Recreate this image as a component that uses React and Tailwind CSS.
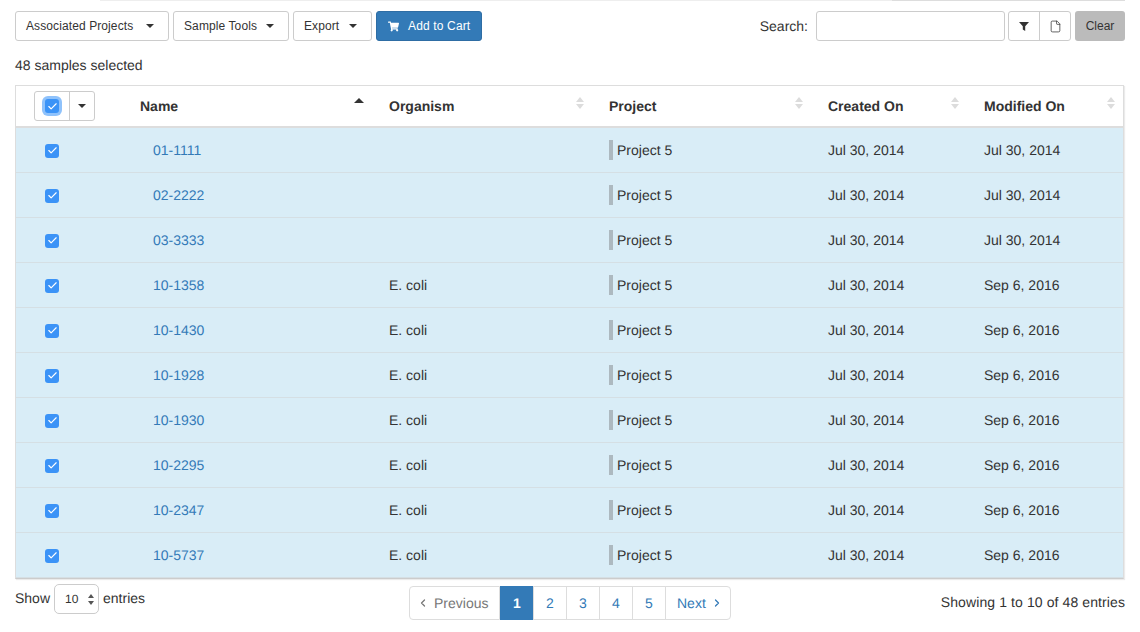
import { Check, ChevronLeft, ChevronRight, File } from 'lucide-react';
import { FaShoppingCart } from 'react-icons/fa';

const rows = [
  ['01-1111', '', 'Jul 30, 2014'],
  ['02-2222', '', 'Jul 30, 2014'],
  ['03-3333', '', 'Jul 30, 2014'],
  ['10-1358', 'E. coli', 'Sep 6, 2016'],
  ['10-1430', 'E. coli', 'Sep 6, 2016'],
  ['10-1928', 'E. coli', 'Sep 6, 2016'],
  ['10-1930', 'E. coli', 'Sep 6, 2016'],
  ['10-2295', 'E. coli', 'Sep 6, 2016'],
  ['10-2347', 'E. coli', 'Sep 6, 2016'],
  ['10-5737', 'E. coli', 'Sep 6, 2016'],
];

function Caret() {
  return (
    <span className="w-0 h-0 border-x-[4px] border-x-transparent border-t-[4px] border-t-[#333]" />
  );
}

function DropButton({ label, width }) {
  return (
    <button className={`h-[30px] pl-[10px] pr-[14px] flex items-center justify-between text-[12px] tracking-[0.1px] text-[#333] bg-white border border-[#ccc] rounded-[3px] ${width}`}>
      {label}
      <Caret />
    </button>
  );
}

function Box({ halo }) {
  return (
    <span className={`w-[14px] h-[14px] rounded-[3px] bg-[#3b93f7] flex items-center justify-center ${halo ? 'ring-[3px] ring-[#8fc2fb]' : ''}`}>
      <Check className="w-[11px] h-[11px] text-white" strokeWidth={2.5} />
    </span>
  );
}

function SortIcon() {
  return (
    <svg width="8" height="12" viewBox="0 0 8 12" className="text-[#dcdcdc]" fill="currentColor">
      <path d="M4 0 8 5H0z" />
      <path d="M4 12 0 7h8z" />
    </svg>
  );
}

function Header({ width, label, sort, right = 'right-[17px]' }) {
  return (
    <div className={`${width} relative flex items-center pl-2 h-full font-bold text-[#333]`}>
      {label}
      <span className={`absolute ${right} top-[11px] flex`}>
        {sort === 'asc' ? <span className="w-0 h-0 mt-px border-x-[5px] border-x-transparent border-b-[5px] border-b-[#333]" /> : <SortIcon />}
      </span>
    </div>
  );
}

function PageLink({ children, className = '' }) {
  return (
    <a className={`h-[34px] flex items-center border border-[#ddd] bg-white text-[#337ab7] ${className}`}>{children}</a>
  );
}

export default function App() {
  return (
    <div className="w-[1140px] h-[632px] overflow-hidden bg-white text-[14px] text-[#333] [text-rendering:geometricPrecision] font-['Liberation_Sans',Arial,sans-serif]">
      <div className="flex h-px ml-[100px] mr-[15px]">
        <div className="w-[792px] bg-[#eee]" />
        <div className="flex-1 bg-[#ddd]" />
      </div>

      <div className="flex items-center justify-between px-[15px] pt-[10px]">
        <div className="flex items-center gap-1">
          <DropButton label="Associated Projects" width="w-[154px]" />
          <DropButton label="Sample Tools" width="w-[116px]" />
          <DropButton label="Export" width="w-[79px]" />
          <button className="h-[30px] w-[106px] pl-[11px] flex items-center gap-[9px] text-[12px] tracking-[0.15px] font-medium text-white bg-[#337ab7] border border-[#2e6da4] rounded-[3px]">
            <FaShoppingCart className="w-[11px] h-[11px]" />
            Add to Cart
          </button>
        </div>
        <div className="flex items-center">
          <span className="mr-2">Search:</span>
          <div className="w-[189px] h-[30px] bg-white border border-[#ccc] rounded-[3px]" />
          <div className="flex h-[30px] ml-[3px] border border-[#ccc] rounded-[3px]">
            <span className="w-[31px] flex items-center justify-center border-r border-[#ccc]">
              <svg width="10" height="10" viewBox="0 0 10 10" fill="#333">
                <path d="M0 1h10L6.2 5.2V10L3.8 8.6V5.2z" />
              </svg>
            </span>
            <span className="w-[30px] flex items-center justify-center">
              <File className="w-[13px] h-[13px]" strokeWidth={1.4} />
            </span>
          </div>
          <button className="h-[30px] w-[50px] ml-1 text-[12px] text-[#333] bg-[#bbb] rounded-[3px]">Clear</button>
        </div>
      </div>

      <div className="pl-[15px] pt-[16px] leading-[17px]">48 samples selected</div>

      <div className="ml-[15px] mt-[11px] w-[1109px] border border-[#ddd] border-b-[#ccc] shadow-[1px_1px_1px_rgba(0,0,0,0.08)]">
        <div className="flex items-center h-[42px] bg-white border-b-2 border-[#ddd]">
          <div className="w-[116px] pl-[18px]">
            <div className="w-[61px] h-[30px] flex border border-[#ccc] rounded-[3px]">
              <span className="w-[35px] flex items-center justify-center border-r border-[#ccc]">
                <Box halo />
              </span>
              <span className="flex-1 flex items-center justify-center">
                <Caret />
              </span>
            </div>
          </div>
          <Header width="w-[249px]" label="Name" sort="asc" />
          <Header width="w-[220px]" label="Organism" />
          <Header width="w-[219px]" label="Project" />
          <Header width="w-[156px]" label="Created On" />
          <Header width="w-[147px]" label="Modified On" right="right-[8px]" />
        </div>

        {rows.map(([name, organism, modified]) => (
          <div key={name} className="flex items-center h-[45px] bg-[#d9edf7] border-b border-[#d5dfe4]">
            <div className="w-[116px] pl-[29px] pt-px">
              <Box />
            </div>
            <div className="w-[249px] pl-[21px] text-[#337ab7]">{name}</div>
            <div className="w-[220px] pl-2">{organism}</div>
            <div className="w-[219px] pl-2 flex items-center">
              <span className="w-1 h-5 mr-1 bg-[#adb9c0]" />
              Project 5
            </div>
            <div className="w-[156px] pl-2">Jul 30, 2014</div>
            <div className="w-[147px] pl-2">{modified}</div>
          </div>
        ))}
      </div>

      <div className="flex items-start justify-between px-[15px] pt-[5px]">
        <div className="w-[300px] flex items-center gap-1 leading-[20px]">
          <span className="mt-[-2px]">Show</span>
          <span className="w-[45px] h-[30px] pl-[10px] pr-[4px] flex items-center justify-between text-[12px] border border-[#ccc] rounded-[5px]">
            10
            <svg width="6" height="11" viewBox="0 0 6 11" fill="#555">
              <path d="M3 0 6 4H0z" />
              <path d="M3 11 0 7h6z" />
            </svg>
          </span>
          <span className="mt-[-2px]">entries</span>
        </div>
        <div className="flex mt-[2px]">
          <PageLink className="w-[91px] pl-[7px] gap-[5px] text-[#777] rounded-l-[4px]">
            <ChevronLeft className="w-[12px] h-[12px]" strokeWidth={2.5} />
            Previous
          </PageLink>
          <PageLink className="w-[34px] justify-center font-bold !bg-[#337ab7] !border-[#337ab7] !text-white">1</PageLink>
          <PageLink className="ml-[-1px] w-[34px] justify-center">2</PageLink>
          <PageLink className="ml-[-1px] w-[34px] justify-center">3</PageLink>
          <PageLink className="ml-[-1px] w-[34px] justify-center">4</PageLink>
          <PageLink className="ml-[-1px] w-[34px] justify-center">5</PageLink>
          <PageLink className="ml-[-1px] w-[66px] pl-[11px] gap-[5px] rounded-r-[4px]">
            Next
            <ChevronRight className="w-[12px] h-[12px]" strokeWidth={2.5} />
          </PageLink>
        </div>
        <div className="w-[300px] pt-[10px] text-right leading-[17px] tracking-[0.1px]">Showing 1 to 10 of 48 entries</div>
      </div>
    </div>
  );
}
